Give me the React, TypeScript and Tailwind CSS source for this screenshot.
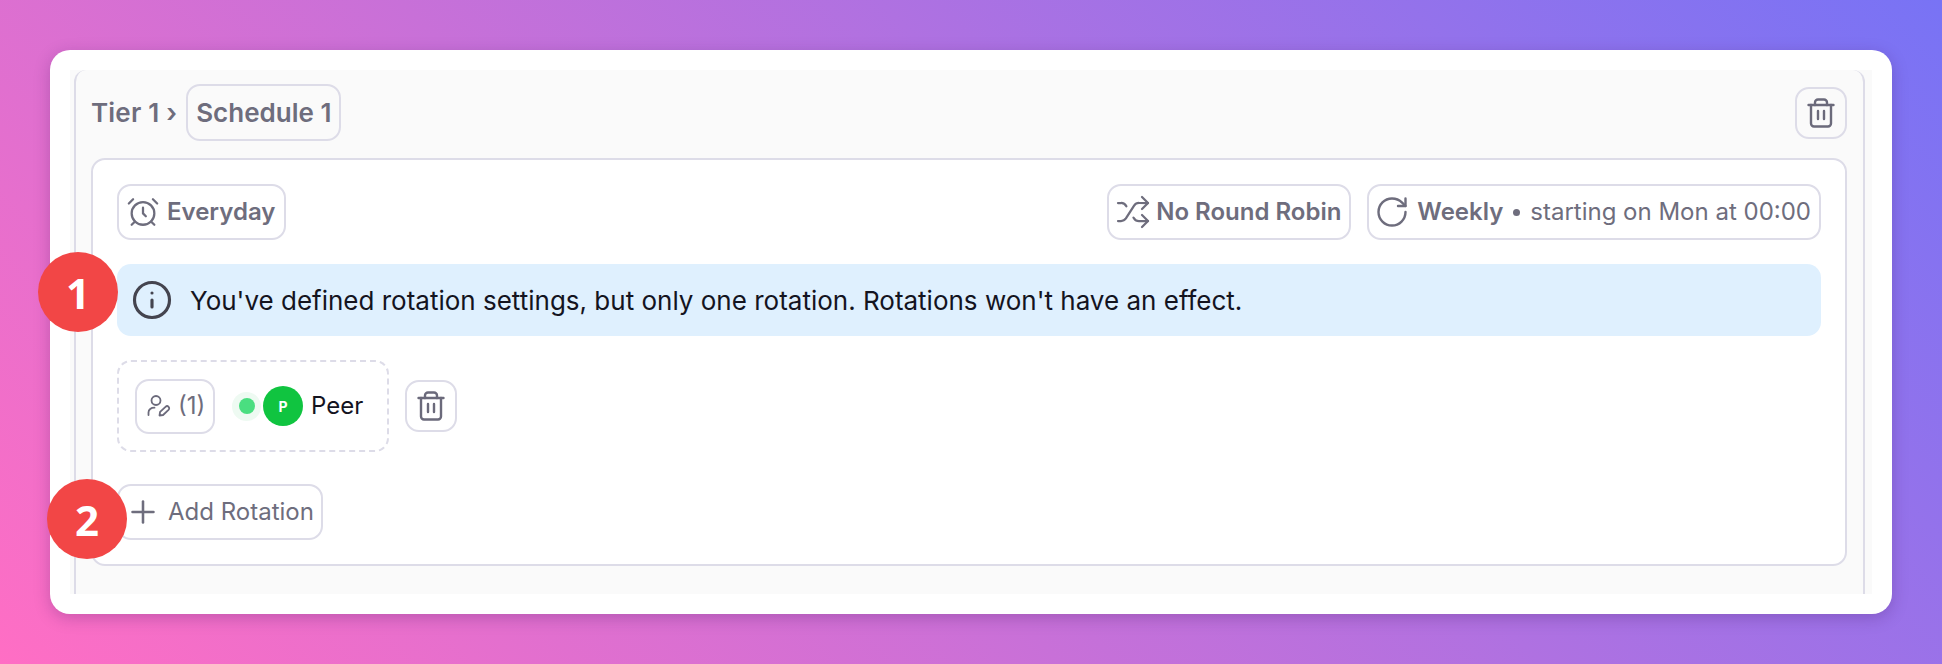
import { AlarmClock, Info, Plus, RotateCw, Shuffle } from 'lucide-react';

function TrashIcon() {
  return (
    <svg width="28" height="30" viewBox="0 0 28 30" fill="none" stroke="#6b6a7b" strokeWidth="2.4" strokeLinecap="round" strokeLinejoin="round">
      <path d="M1.500 7h25" />
      <path d="M8 7V4.500a3 3 0 0 1 3-3h6a3 3 0 0 1 3 3V7" />
      <path d="M4 7v18.500a3 3 0 0 0 3 3h14a3 3 0 0 0 3-3V7" />
      <path d="M11 13v8M17 13v8" />
    </svg>
  );
}

function UserEditIcon() {
  return (
    <svg width="24" height="22" viewBox="0 0 24 22" fill="none" stroke="#6b6a7b" strokeWidth="1.800" strokeLinecap="round" strokeLinejoin="round">
      <circle cx="9" cy="5.500" r="4.500" />
      <path d="M1.500 20v-2.500c0-3 2.500-4.800 6-4.800" />
      <path d="M12.500 20.500l.6-3.600 5.400-5.100c1-.9 2.300-.8 3.100 0s.8 2.200-.1 3.100l-5.400 5.100z" />
    </svg>
  );
}

function Chip({ className, children }: { className: string; children: React.ReactNode }) {
  return (
    <div className={`flex items-center border-2 border-[#dddce8] rounded-[14px] text-[#6e6d7d] ${className}`}>
      {children}
    </div>
  );
}

function Badge({ n, className }: { n: number; className: string }) {
  return (
    <div className={`absolute w-20 h-20 rounded-full bg-[#f24646] text-white flex items-center justify-center text-[42px] font-bold font-['Noto_Sans',sans-serif] ${className}`}>
      {n}
    </div>
  );
}

export default function App() {
  return (
    <div className="relative w-[1942px] h-[664px] p-[50px] overflow-hidden bg-linear-[45deg,#ff6ec4,#7873f5] font-['Inter',sans-serif]">
      <div className="h-full bg-white rounded-[20px] p-5 shadow-[0_4px_16px_rgba(60,20,90,0.25)]">
        <div className="h-full bg-[#fafafa] px-1">
          <div className="h-full w-[1791px] border-x-2 border-[#dddce8] rounded-t-xl pt-[14px] pl-[15px] pr-4">
            <div className="flex items-center justify-between h-[57px]">
              <div className="flex items-center gap-[9px] text-[26px] font-semibold text-[#6e6d7d]">
                <span className="tracking-[0.2px]">Tier 1 ›</span>
                <div className="h-[57px] px-2 flex items-center border-2 border-[#dddce8] rounded-[14px]">Schedule 1</div>
              </div>
              <Chip className="w-[52px] h-[52px] justify-center">
                <TrashIcon />
              </Chip>
            </div>

            <div className="mt-[17px] bg-white border-2 border-[#dddce8] rounded-[14px] p-6">
              <div className="flex items-center justify-between text-[24px]">
                <Chip className="h-[56px] pl-[7px] pr-[9px] gap-[7px] font-semibold">
                  <AlarmClock size={34} strokeWidth={1.600} />
                  Everyday
                </Chip>
                <div className="flex gap-4">
                  <Chip className="h-[56px] pl-[6px] pr-[8px] gap-[5px] font-semibold">
                    <Shuffle size={36} strokeWidth={1.500} />
                    No Round Robin
                  </Chip>
                  <Chip className="h-[56px] pl-[5px] pr-[8px] gap-[7px]">
                    <RotateCw size={36} strokeWidth={1.600} />
                    <span className="font-semibold">Weekly</span>
                    <span className="w-[7px] h-[7px] mx-[3px] rounded-full bg-[#6e6d7d]" />
                    <span>starting on Mon at 00:00</span>
                  </Chip>
                </div>
              </div>

              <div className="mt-6 h-[72px] bg-[#dff0fe] rounded-[14px] pl-[14px] flex items-center gap-[17px] text-[26px] text-[#14141f]">
                <Info size={42} strokeWidth={1.800} className="text-[#44444f]" />
                You've defined rotation settings, but only one rotation. Rotations won't have an effect.
              </div>

              <div className="mt-6 flex items-center gap-4">
                <div className="w-[272px] h-[92px] border-2 border-dashed border-[#dddce8] rounded-[14px] pl-4 flex items-center">
                  <Chip className="w-[80px] h-[55px] pl-[10px] gap-[7px] text-[24px]">
                    <UserEditIcon />
                    (1)
                  </Chip>
                  <span className="ml-[17px] w-[29px] h-[29px] rounded-full bg-[#eefaf2] flex items-center justify-center">
                    <span className="w-4 h-4 rounded-full bg-[#4ade80]" />
                  </span>
                  <span className="ml-[2px] w-10 h-10 rounded-full bg-[#10c440] text-white text-[14px] font-bold flex items-center justify-center">P</span>
                  <span className="ml-[8px] text-[24px] text-[#14141f]">Peer</span>
                </div>
                <Chip className="w-[52px] h-[52px] justify-center">
                  <TrashIcon />
                </Chip>
              </div>

              <div className="mt-8">
                <Chip className="w-[206px] h-[56px] pl-[6px] gap-[7px] text-[24px]">
                  <Plus size={36} strokeWidth={1.700} />
                  Add Rotation
                </Chip>
              </div>
            </div>
          </div>
        </div>
      </div>
      <Badge n={1} className="left-[38px] top-[252px]" />
      <Badge n={2} className="left-[47px] top-[479px]" />
    </div>
  );
}
